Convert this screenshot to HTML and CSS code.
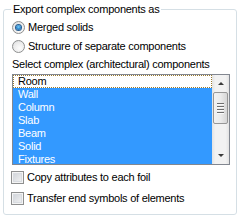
FILE: index.html
```html
<!DOCTYPE html>
<html lang="en">
<head>
    <meta charset="UTF-8">
    <title>Export complex components</title>
    <link rel="stylesheet" href="styles.css">
</head>
<body>
    <fieldset class="group">
        <legend>Export complex components as</legend>

        <div class="opt">
            <span class="radio checked"></span>
            <span>Merged solids</span>
        </div>
        <div class="opt">
            <span class="radio"></span>
            <span>Structure of separate components</span>
        </div>

        <div class="caption">Select complex (architectural) components</div>

        <div class="listbox">
            <ul class="items">
                <li class="focus">Room</li>
                <li class="sel">Wall</li>
                <li class="sel">Column</li>
                <li class="sel">Slab</li>
                <li class="sel">Beam</li>
                <li class="sel">Solid</li>
                <li class="sel">Fixtures</li>
            </ul>
            <div class="scroll">
                <div class="arrow up"></div>
                <div class="thumb"><i></i><i></i><i></i><i></i></div>
                <div class="track"></div>
                <div class="arrow down"></div>
            </div>
        </div>

        <div class="opt check-row first">
            <span class="check"></span>
            <span>Copy attributes to each foil</span>
        </div>
        <div class="opt check-row">
            <span class="check"></span>
            <span>Transfer end symbols of elements</span>
        </div>
    </fieldset>
</body>
</html>
```

FILE: styles.css
```css
body {
    margin: 0;
    background-color: #fff;
    font-family: "Liberation Sans", Arial, sans-serif;
    font-size: 11px;
    line-height: 13px;
    letter-spacing: -0.25px;
    color: #000;
}

.group {
    box-sizing: border-box;
    width: 234px;
    margin: 3px 0 0 3px;
    padding: 2px 0 5px 8px;
    border: 1px solid #d5dfe5;
    border-radius: 3px;
}

.group legend {
    padding: 0 2px;
    margin-left: -1px;
    line-height: 13px;
}

.opt {
    display: flex;
    align-items: center;
    gap: 3px;
    height: 19px;
    white-space: nowrap;
}

/* radio buttons */
.radio {
    box-sizing: border-box;
    width: 13px;
    height: 13px;
    border-radius: 50%;
    border: 1px solid #8e8f8f;
    background: radial-gradient(circle at 60% 65%, #fcfcfc 0%, #ececec 55%, #d4d7da 100%);
    display: flex;
    align-items: center;
    justify-content: center;
    flex: none;
}

.radio.checked::after {
    content: "";
    width: 5px;
    height: 5px;
    border-radius: 50%;
    background: radial-gradient(circle at 50% 40%, #7cd0f6 0%, #2e8ad2 50%, #14477f 100%);
    box-shadow: 0 0 0 1px #2a5e8f;
}

.caption {
    margin-top: 2px;
    white-space: nowrap;
}

/* list box */
.listbox {
    box-sizing: border-box;
    display: flex;
    width: 218px;
    height: 91px;
    margin-top: 3px;
    border: 1px solid #828790;
    background-color: #fff;
}

.items {
    flex: 1;
    margin: 0;
    padding: 0;
    list-style: none;
    overflow: hidden;
}

.items li {
    height: 13px;
    padding-left: 5px;
    line-height: 13px;
}

.items li.sel {
    background-color: #3399ff;
    color: #fff;
}

.items li.focus {
    outline: 1px dotted #9a7a30;
    outline-offset: -1px;
}

.scroll {
    display: flex;
    flex-direction: column;
    width: 17px;
    background: linear-gradient(to right, #e3e3e3, #f2f2f2 20%, #f2f2f2 80%, #e3e3e3);
}

.arrow {
    height: 17px;
    display: flex;
    align-items: center;
    justify-content: center;
}

.arrow::after {
    content: "";
    border-left: 3px solid transparent;
    border-right: 3px solid transparent;
}

.arrow.up::after {
    border-bottom: 3px solid #3b3b3b;
}

.arrow.down::after {
    border-top: 3px solid #3b3b3b;
}

.thumb {
    box-sizing: border-box;
    height: 32px;
    margin: 0 1px;
    border: 1px solid #979797;
    border-radius: 2px;
    background: linear-gradient(to right, #f2f2f2, #ebebeb 50%, #d6d6d6);
    display: flex;
    flex-direction: column;
    align-items: center;
    justify-content: center;
    gap: 1px;
}

.thumb i {
    display: block;
    width: 7px;
    height: 1px;
    background-color: #6e6e6e;
    border-bottom: 1px solid #fafafa;
}

.track {
    flex: 1;
}

/* check boxes */
.check-row {
    height: 21px;
    margin-left: -1px;
}

.check-row.first {
    margin-top: 2px;
}

.check {
    box-sizing: border-box;
    width: 13px;
    height: 13px;
    flex: none;
    border: 1px solid #8e8f8f;
    background: linear-gradient(135deg, #cbcfd5, #f6f6f6);
    box-shadow: inset 0 0 0 1px #f4f4f4, inset 0 0 0 2px #d8dbe0;
}
```
